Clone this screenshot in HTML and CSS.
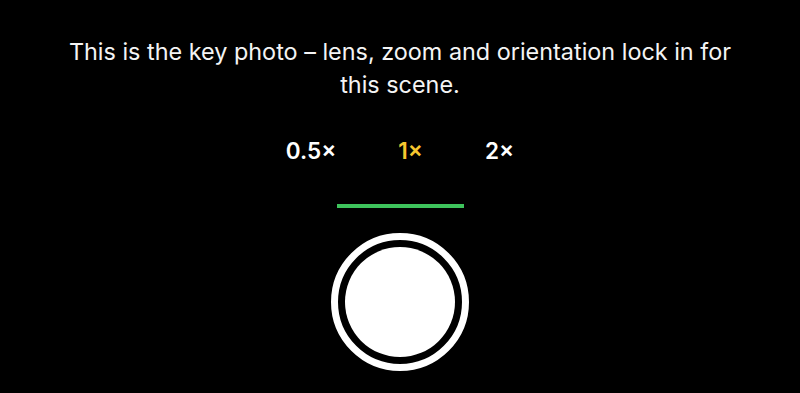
FILE: index.html
```html
<!DOCTYPE html>
<html>
<head>
<meta charset="utf-8">
<link rel="stylesheet" href="styles.css">
</head>
<body>
<main class="screen">
  <p class="hint">This is the key photo – lens, zoom and orientation lock in for this scene.</p>
  <div class="zooms">
    <span class="zoom">0.5×</span>
    <span class="zoom active">1×</span>
    <span class="zoom">2×</span>
  </div>
  <div class="level"></div>
  <button class="shutter"><span class="shutter-inner"></span></button>
</main>
</body>
</html>
```
FILE: styles.css
```css
html, body {
  margin: 0;
  padding: 0;
  background: #000;
}
.screen {
  width: 800px;
  height: 393px;
  display: flex;
  flex-direction: column;
  align-items: center;
  padding-top: 35px;
  box-sizing: border-box;
  font-family: Inter, Roboto, "Liberation Sans", sans-serif;
  color: #f4f4f4;
}
.hint {
  margin: 0;
  width: 690px;
  text-align: center;
  font-size: 23.4px;
  line-height: 33px;
}
.zooms {
  margin-top: 37px;
  display: flex;
  gap: 62px;
  font-size: 22.5px;
  font-weight: 600;
  line-height: 26px;
  color: #fff;
}
.zoom.active {
  color: #f6c62f;
}
.level {
  margin-top: 40px;
  width: 127px;
  height: 4px;
  background: #3ec35c;
}
.shutter {
  margin-top: 25px;
  width: 138px;
  height: 138px;
  border-radius: 50%;
  border: 7px solid #fff;
  background: #000;
  padding: 0;
  display: flex;
  align-items: center;
  justify-content: center;
  box-sizing: border-box;
}
.shutter-inner {
  width: 110px;
  height: 110px;
  border-radius: 50%;
  background: #fff;
}
```
